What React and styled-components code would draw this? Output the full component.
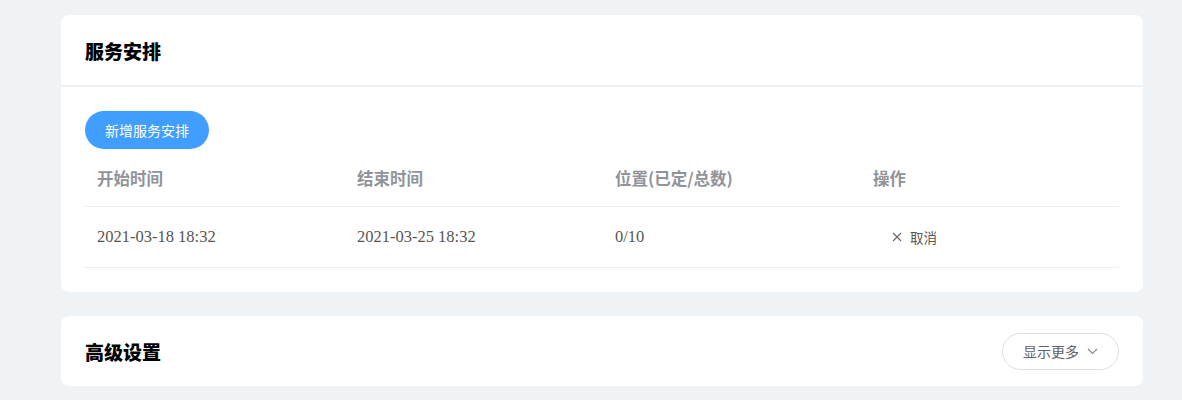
import styled, { createGlobalStyle } from 'styled-components';

const GlobalStyle = createGlobalStyle`
  body {
    margin: 0;
    background: #f0f3f6;
    font-family: "Noto Sans CJK SC", "Noto Sans", sans-serif;
  }
`;

const Page = styled.div`
  display: flex;
  flex-direction: column;
  gap: 24px;
  padding: 15px 39px 15px 61px;
`;

const Card = styled.section`
  background: #fff;
  border-radius: 8px;
`;

const CardHeader = styled.div`
  display: flex;
  align-items: center;
  justify-content: space-between;
  height: 70px;
  padding: 0 24px;
  border-bottom: ${(p) => (p.divided ? '2px solid #eef1f4' : 'none')};
`;

const Title = styled.h2`
  margin: 0;
  font-size: 19px;
  font-weight: 900;
  color: #000;
`;

const CardBody = styled.div`
  padding: 24px 24px 24px;
`;

const PrimaryBtn = styled.button`
  height: 38px;
  padding: 0 20px;
  border: none;
  border-radius: 19px;
  background: #409eff;
  color: #fff;
  font-family: inherit;
  font-size: 14px;
  cursor: pointer;
`;

const Table = styled.div`
  display: flex;
  flex-direction: column;
`;

const Row = styled.div`
  display: grid;
  grid-template-columns: 260px 258px 258px 1fr;
  align-items: center;
  height: ${(p) => (p.head ? '57px' : '60px')};
  border-bottom: 1px solid #ebeef5;
`;

const HeadCell = styled.div`
  padding-left: 12px;
  font-size: 16.5px;
  font-weight: 700;
  color: #909399;
`;

const Cell = styled.div`
  padding-left: 12px;
  font-family: "Liberation Serif", "Noto Sans CJK SC", serif;
  font-size: 16.5px;
  color: #555;
`;

const TextBtn = styled.button`
  display: inline-flex;
  align-items: center;
  gap: 8px;
  margin-left: 19px;
  padding: 0;
  border: none;
  background: none;
  font-family: "Noto Sans CJK SC", sans-serif;
  font-size: 13.5px;
  color: #555;
  cursor: pointer;
`;

const GhostBtn = styled.button`
  display: inline-flex;
  align-items: center;
  gap: 8px;
  height: 37px;
  padding: 0 20px;
  border: 1px solid #dcdfe6;
  border-radius: 19px;
  background: #fff;
  font-family: inherit;
  font-size: 14px;
  color: #606266;
  cursor: pointer;
`;

const rows = [{ start: '2021-03-18 18:32', end: '2021-03-25 18:32', seats: '0/10' }];

export default function App() {
  return (
    <>
      <GlobalStyle />
      <Page>
        <Card>
          <CardHeader divided>
            <Title>服务安排</Title>
          </CardHeader>
          <CardBody>
            <PrimaryBtn>新增服务安排</PrimaryBtn>
            <Table>
              <Row head>
                <HeadCell>开始时间</HeadCell>
                <HeadCell>结束时间</HeadCell>
                <HeadCell>位置(已定/总数)</HeadCell>
                <HeadCell>操作</HeadCell>
              </Row>
              {rows.map((r) => (
                <Row key={r.start}>
                  <Cell>{r.start}</Cell>
                  <Cell>{r.end}</Cell>
                  <Cell>{r.seats}</Cell>
                  <Cell>
                    <TextBtn>
                      <svg width="10" height="10" viewBox="0 0 10 10">
                        <path d="M1 1L9 9M9 1L1 9" stroke="#666" strokeWidth="1.1" />
                      </svg>
                      取消
                    </TextBtn>
                  </Cell>
                </Row>
              ))}
            </Table>
          </CardBody>
        </Card>
        <Card>
          <CardHeader>
            <Title>高级设置</Title>
            <GhostBtn>
              显示更多
              <svg width="11" height="7" viewBox="0 0 11 7">
                <path d="M1 1L5.5 5.5L10 1" fill="none" stroke="#888" strokeWidth="1.1" />
              </svg>
            </GhostBtn>
          </CardHeader>
        </Card>
      </Page>
    </>
  );
}
